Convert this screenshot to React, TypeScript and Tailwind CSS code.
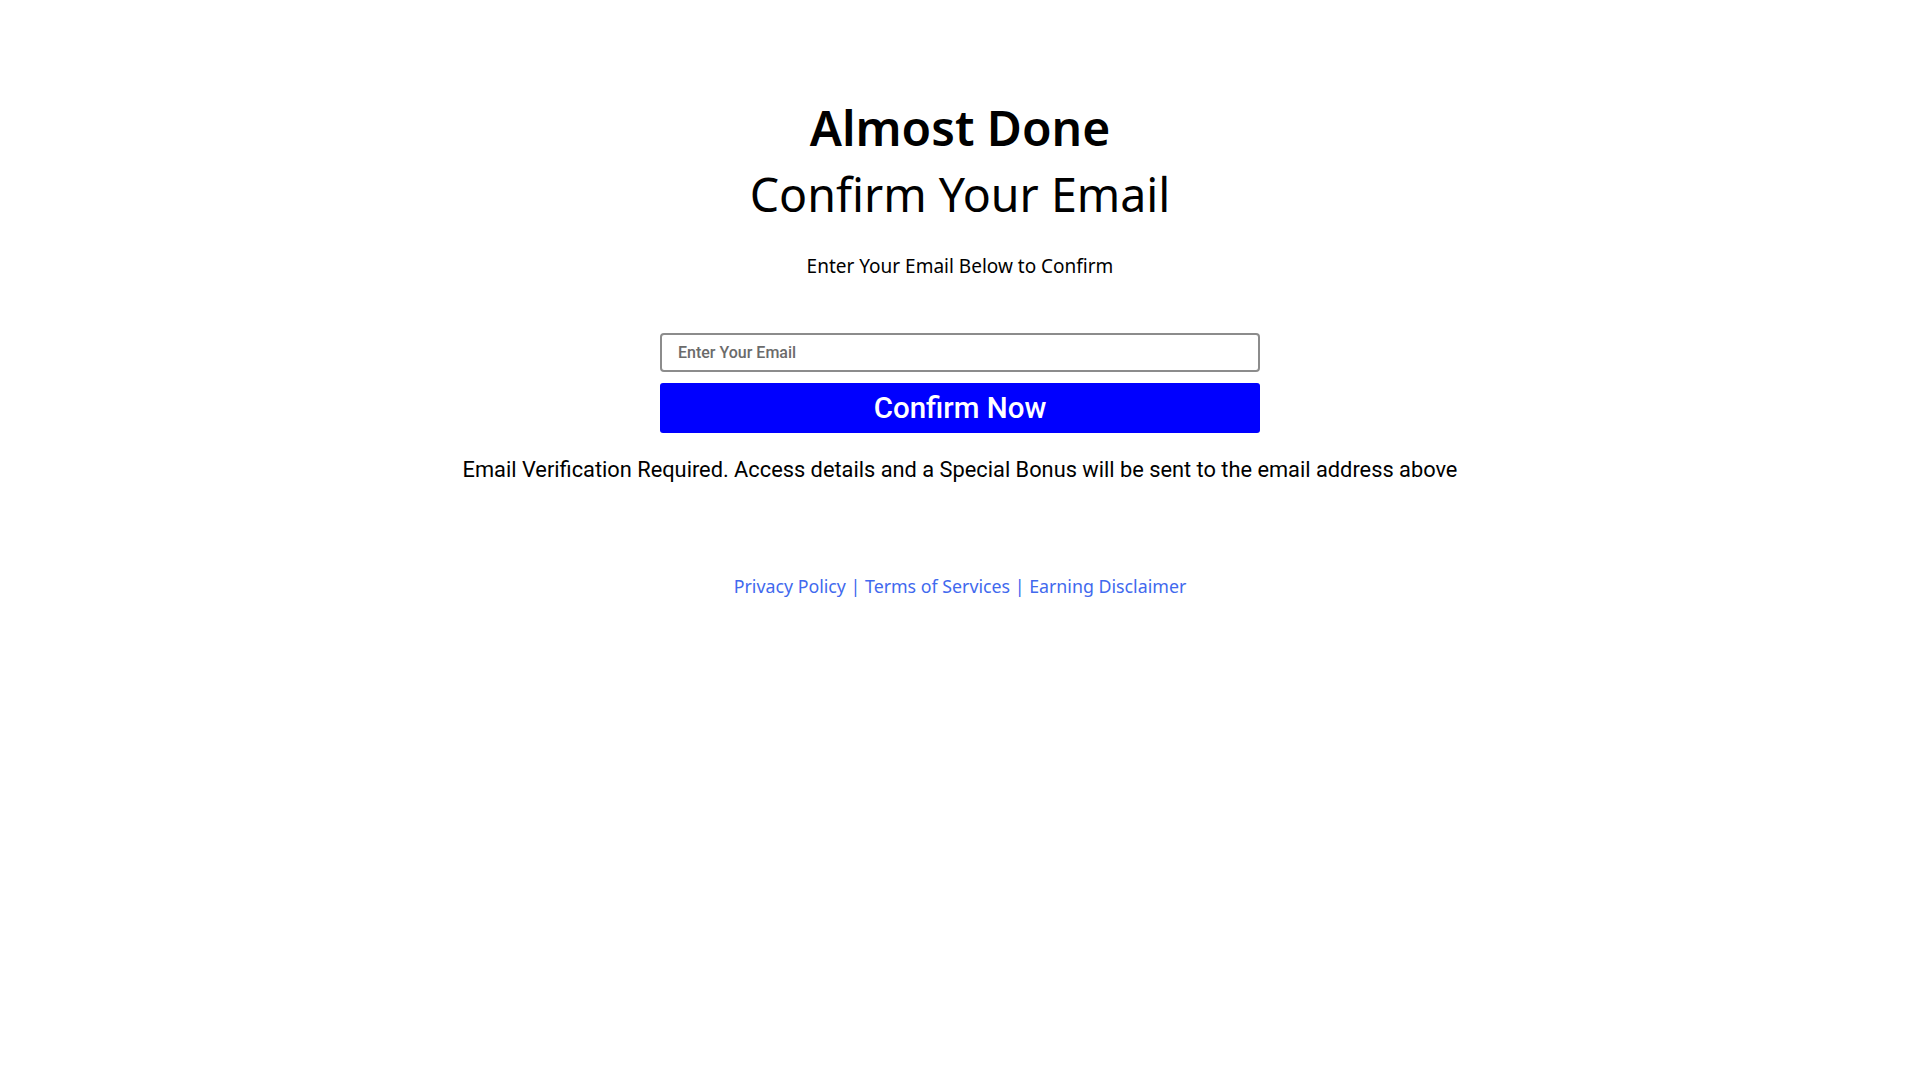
import React from 'react';

export default function App() {
  return (
    <div className="min-h-screen bg-white flex flex-col items-center text-black">
      {/* Titles */}
      <h1 className="mt-[100px] font-['Noto_Sans',sans-serif] text-[48px] leading-[56px] font-semibold">
        Almost Done
      </h1>
      <h2 className="mt-[10px] font-['Noto_Sans',sans-serif] text-[46.5px] leading-[56px] font-normal">
        Confirm Your Email
      </h2>
      <p className="mt-[30px] font-['Noto_Sans',sans-serif] text-[19px] leading-[28px]">
        Enter Your Email Below to Confirm
      </p>

      {/* Form */}
      <form className="mt-[53px] w-[600px] flex flex-col gap-[11px]" onSubmit={(e) => e.preventDefault()}>
        <input
          type="email"
          placeholder="Enter Your Email"
          className="h-[39px] w-full rounded-[4px] border-2 border-[#8c8c8c] px-[16px] font-['Roboto',sans-serif] text-[16px] font-medium text-[#333] placeholder:text-[#6b6b6b] outline-none"
        />
        <button
          type="submit"
          className="h-[50px] w-full rounded-[3px] bg-[#0000ff] font-['Roboto',sans-serif] text-[29.5px] font-medium text-white"
        >
          Confirm Now
        </button>
      </form>

      <p className="mt-[21px] font-['Roboto',sans-serif] text-[21.8px] leading-[32px]">
        Email Verification Required. Access details and a Special Bonus will be sent to the email address above
      </p>

      {/* Footer links */}
      <div className="mt-[86px] font-['Noto_Sans',sans-serif] text-[17.8px] leading-[28px] text-[#4169ee]">
        <a href="#">Privacy Policy</a> | <a href="#">Terms of Services</a> | <a href="#">Earning Disclaimer</a>
      </div>
    </div>
  );
}
